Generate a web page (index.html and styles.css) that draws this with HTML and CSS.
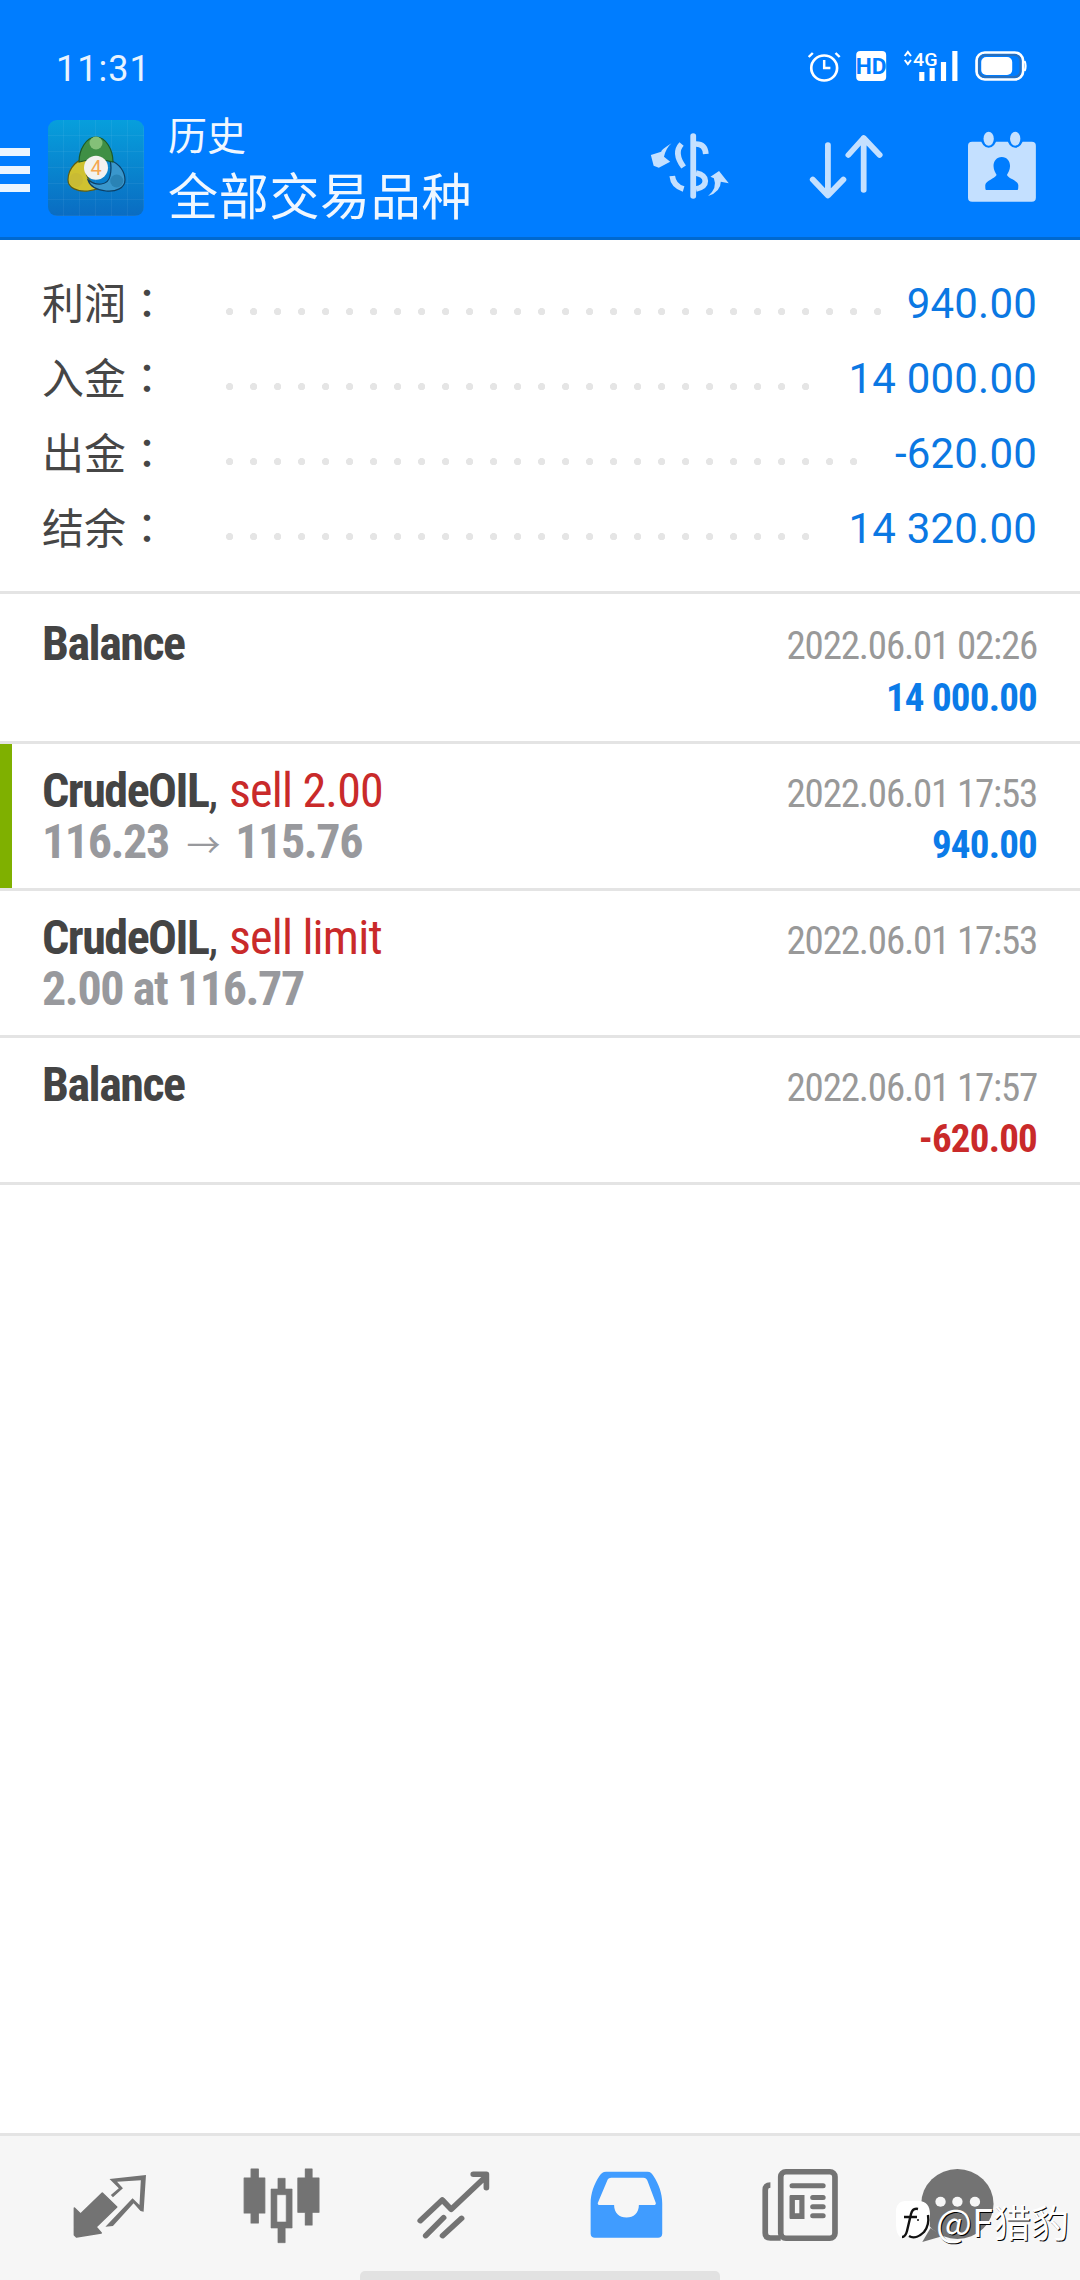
FILE: index.html
```html
<!DOCTYPE html>
<html lang="zh-CN">
<head>
<meta charset="utf-8">
<title>历史</title>
<link rel="stylesheet" href="styles.css">
</head>
<body>
<div class="app">
  <header class="appbar">
    <div class="status">
      <span class="time">11:31</span>
      <svg class="status-icons" viewBox="791.600 40 232.300 50" width="240" height="50" preserveAspectRatio="none">
        <circle cx="815" cy="68" r="12.500" fill="none" stroke="#fff" stroke-width="2.600"/>
        <path d="M815 60v8h6M804 53l-4 4M826 53l4 4" fill="none" stroke="#fff" stroke-width="2.400"/>
        <rect x="846" y="51" width="29" height="30" rx="4" fill="#fff"/>
        <text x="860.500" y="74" class="hd">HD</text>
        <path d="M893 56l3-4 3 4M893 60l3 4 3-4" fill="none" stroke="#fff" stroke-width="2"/>
        <text x="901" y="66" class="net">4G</text>
        <path d="M907 72h5v9h-5zM917 68h5v13h-5zM928 62h5v19h-5zM939 51h5v30h-5z" fill="#fff"/>
        <rect x="962.500" y="52.500" width="45" height="27" rx="8" fill="none" stroke="#fff" stroke-width="2.600"/>
        <rect x="965" y="55" width="40" height="22" rx="6" fill="none" stroke="#2a6fbb" stroke-width="2"/>
        <rect x="967" y="57" width="30" height="18" rx="5" fill="#fff"/>
        <path d="M1009 61q2 5 0 10" fill="none" stroke="#fff" stroke-width="2"/>
      </svg>
    </div>
    <div class="toolbar">
      <div class="burger"><i></i><i></i><i></i></div>
      <svg class="logo" viewBox="48 120 96 96" width="96" height="96">
        <defs>
          <linearGradient id="lg" x1="0" y1="0" x2="0" y2="1">
            <stop offset="0" stop-color="#079fdc"/>
            <stop offset="1" stop-color="#0a6cc2"/>
          </linearGradient>
          <pattern id="grid" x="48" y="120" width="16" height="16" patternUnits="userSpaceOnUse">
            <path d="M16 0V16H0" fill="none" stroke="#fff" stroke-opacity=".1" stroke-width="1"/>
          </pattern>
        </defs>
        <rect x="48" y="120" width="96" height="96" rx="9" fill="url(#lg)"/>
        <rect x="48" y="120" width="96" height="96" rx="9" fill="url(#grid)"/>
        <path d="M92 157C78 157 68 168 68 180C68 188 78 192 88 191C96 190 104 187 105 185Q88 186 86 172Q86 162 92 157Z" fill="#cfc230" stroke="#5f5c12" stroke-width="1.200"/>
        <path d="M110 160C120 164 125 172 125 180C125 188 116 192 106 191C97 190 90 186 88 180C96 186 108 186 110 176Q112 168 110 160Z" fill="#3a97cc" stroke="#0b3f66" stroke-width="1.200"/>
        <path d="M96 137C106 137 113 150 113 162L104 160Q96 154 88 160L79 162C79 150 86 137 96 137Z" fill="#3f8f45" stroke="#1d5a26" stroke-width="1.200"/>
        <circle cx="96" cy="143" r="6.500" fill="#84c078"/>
        <circle cx="76" cy="180" r="7" fill="#c9bb34"/>
        <circle cx="116.700" cy="181" r="6.500" fill="#2a83b5"/>
        <circle cx="96" cy="167.700" r="12" fill="#f2f2f0"/>
        <text x="96" y="175" class="four">4</text>
      </svg>
      <div class="heading">
        <div class="heading-sub">历史</div>
        <div class="heading-main">全部交易品种</div>
      </div>
      <div class="actions">
        <svg class="act" viewBox="627.100 114 130.700 123" width="135" height="123" preserveAspectRatio="none">
          <path d="M688.300 136v60" stroke="#c4e0ff" stroke-width="5.600" stroke-linecap="round" fill="none"/>
          <path d="M691 144q9 0 9.500 10M677 144q-8 9 2 23M691 173q9 2 9 8t-9 8M668 176q1 10 11 13" stroke="#c4e0ff" stroke-width="5.500" fill="none"/>
          <path d="M667.300 143.300Q657 150 657.300 151.700L647.300 155 650 165.700 655 167.700 666 161.700 660 156.700Q662 148 667.300 143.300Z" fill="#c4e0ff"/>
          <path d="M702.700 196Q712 188 708.300 178.300L705 176.700 713.300 171 722.700 183.300 715 181.700Q715 191.700 702.700 196Z" fill="#c4e0ff"/>
        </svg>
        <svg class="act" viewBox="757.800 114 135.500 123" width="140" height="123" preserveAspectRatio="none">
          <path d="M818.700 145v50M804 179.500l14.700 16 15-16M853.300 138v52M838.500 155l14.800-17 15.500 17" fill="none" stroke="#c4e0ff" stroke-width="5.600" stroke-linecap="round" stroke-linejoin="round"/>
        </svg>
        <svg class="act" viewBox="893.300 114 130.700 123" width="135" height="123" preserveAspectRatio="none">
          <rect x="954.300" y="141.700" width="65.700" height="60" rx="4" fill="#c4e0ff"/>
          <ellipse cx="974.300" cy="138.700" rx="7.500" ry="9" fill="#007dff"/>
          <ellipse cx="1000" cy="138.700" rx="7.500" ry="9" fill="#007dff"/>
          <ellipse cx="974.300" cy="138.700" rx="5" ry="7" fill="#c4e0ff"/>
          <ellipse cx="1000" cy="138.700" rx="5" ry="7" fill="#c4e0ff"/>
          <path d="M987 157c5 0 8 4 8 9 0 4-2 7-3 9 2 4 10 5 11 10 0 3 0 5-1 5h-30c-1 0-1-2-1-5 1-5 9-6 11-10-1-2-3-5-3-9 0-5 3-9 8-9z" fill="#007dff"/>
        </svg>
      </div>
    </div>
  </header>

  <section class="summary">
    <div class="sum-row">
      <div class="sum-label">利润<span class="colon" lang="zh-TW">：</span></div>
      <div class="dots"></div>
      <div class="sum-value">940.00</div>
    </div>
    <div class="sum-row">
      <div class="sum-label">入金<span class="colon" lang="zh-TW">：</span></div>
      <div class="dots"></div>
      <div class="sum-value">14 000.00</div>
    </div>
    <div class="sum-row">
      <div class="sum-label">出金<span class="colon" lang="zh-TW">：</span></div>
      <div class="dots"></div>
      <div class="sum-value">-620.00</div>
    </div>
    <div class="sum-row">
      <div class="sum-label">结余<span class="colon" lang="zh-TW">：</span></div>
      <div class="dots"></div>
      <div class="sum-value">14 320.00</div>
    </div>
  </section>

  <main class="list">
    <article class="deal deal-first">
      <div class="deal-left">
        <div class="deal-title"><b>Balance</b></div>
      </div>
      <div class="deal-right">
        <div class="deal-date">2022.06.01 02:26</div>
        <div class="deal-amount pos">14 000.00</div>
      </div>
    </article>
    <article class="deal deal-closed">
      <div class="deal-left">
        <div class="deal-title"><b>CrudeOIL</b>, <span class="red">sell 2.00</span></div>
        <div class="deal-sub">116.23 <span class="arrow">→</span> 115.76</div>
      </div>
      <div class="deal-right">
        <div class="deal-date">2022.06.01 17:53</div>
        <div class="deal-amount pos">940.00</div>
      </div>
    </article>
    <article class="deal">
      <div class="deal-left">
        <div class="deal-title"><b>CrudeOIL</b>, <span class="red">sell limit</span></div>
        <div class="deal-sub">2.00 at 116.77</div>
      </div>
      <div class="deal-right">
        <div class="deal-date">2022.06.01 17:53</div>
      </div>
    </article>
    <article class="deal">
      <div class="deal-left">
        <div class="deal-title"><b>Balance</b></div>
      </div>
      <div class="deal-right">
        <div class="deal-date">2022.06.01 17:57</div>
        <div class="deal-amount neg">-620.00</div>
      </div>
    </article>
  </main>

  <nav class="nav">
    <svg viewBox="0 0 183.900 144" width="190" height="144" preserveAspectRatio="none">
      <path d="M72 72L78 78 99 57 113 71 93 91 98 97 74 101 72 99Z" fill="#737373" stroke="#737373" stroke-width="1.500" stroke-linejoin="round"/>
      <path d="M106 43L141.300 39 139 75.700 136 75 129.300 67.300 109.300 90 102 90.700 128.300 62.300 135 69 136.300 44.300 113.300 45.700 119 52.300 109.300 61.300 107.300 59 115 52.300Z" fill="#737373"/>
    </svg>
    <svg viewBox="183.900 0 164.500 144" width="170" height="144" preserveAspectRatio="none">
      <path d="M243 33h7v9h6.300v35H250v10h-7V77h-6.700V42H243z" fill="#737373" stroke="#737373" stroke-linejoin="round"/>
      <path d="M295.500 33h6.500v9h6.700v34.300H302V89h-6.500V76.300h-7.200V42h7.200z" fill="#737373" stroke="#737373" stroke-linejoin="round"/>
      <path fill-rule="evenodd" d="M269 42.300h7V53h6.700v39H276v14.700h-7V92h-6.700V53H269zM268 58.700V86h9V58.700z" fill="#737373" stroke="#737373" stroke-width=".6" stroke-linejoin="round"/>
    </svg>
    <svg viewBox="348.400 0 164.500 144" width="170" height="144" preserveAspectRatio="none">
      <path d="M406.700 84.700L428 64l8.700 9.300L470 40.700M458 38.300h12.700v13.400M412 99.700l17.300-18M428.300 99.700l18.400-17.400" fill="none" stroke="#737373" stroke-width="5.500" stroke-linecap="round" stroke-linejoin="round"/>
    </svg>
    <svg viewBox="530.300 0 169.400 144" width="175" height="144" preserveAspectRatio="none">
      <path fill-rule="evenodd" d="M604 35.700h40c3 0 4.500 2 6 4.500 5 8 8.300 17 8.300 27v30.500c0 2.500-1.800 4-4 4H593c-2.200 0-4-1.500-4-4V67.200c0-10 3.300-19 8.300-27 1.500-2.500 3.700-4.500 6.700-4.500zM609 41.700c-2 0-3.500 1-4 3l-9 22c-.5 1.500.5 2.300 2 2.300h13.700c0 8 5 12.500 12 12.500s12-4.500 12-12.500H650c1.500 0 2.500-.8 2-2.300l-8-22c-.7-2-2-3-4-3z" fill="#409cff"/>
    </svg>
    <svg viewBox="699.700 0 159.700 144" width="165" height="144" preserveAspectRatio="none">
      <rect x="773" y="35.700" width="52.500" height="66.500" rx="5" fill="none" stroke="#737373" stroke-width="5.500"/>
      <path d="M763 49q-5 0-5 5v43q0 5 5 5h10" fill="none" stroke="#737373" stroke-width="5.500"/>
      <path d="M784 49.800h30M804 61.500h10M804 70.700h10M804 79.800h10" fill="none" stroke="#737373" stroke-width="5" stroke-linecap="round"/>
      <path fill-rule="evenodd" d="M783 59h13v24h-13c-1 0-1.500-.5-1.500-1.500v-21c0-1 .5-1.500 1.500-1.500zM786.700 64v13.300h4.300V64z" fill="#737373"/>
    </svg>
    <svg viewBox="859.400 0 203.300 144" width="210" height="144" preserveAspectRatio="none">
      <circle cx="944" cy="68" r="35" fill="#737373"/>
      <path d="M918 92l-8 14 20-6z" fill="#737373"/>
      <circle cx="927.700" cy="65.700" r="5" fill="#f6f6f6"/>
      <circle cx="944" cy="65.700" r="5" fill="#f6f6f6"/>
      <circle cx="961" cy="65.700" r="5" fill="#f6f6f6"/>
    </svg>
    <div class="home-bar"></div>
    <div class="watermark">
      <svg class="wm-logo" viewBox="0 0 36 42" width="36" height="42">
        <path d="M10 1h14c7 0 11 5 11 13v8c0 9-5 14-13 14H12L5 37C2 34 1 30 1 22V11C1 5 5 1 10 1z" fill="#fff"/>
        <path d="M23 9c-4-1-6 1-7 5l-4 17c-1 4-3 6-5 6M9 17h13M14 36c5 3 11 0 15-4 4-5 5-11 4-17" fill="none" stroke="#111" stroke-width="2.400"/>
        <circle cx="23" cy="20" r="1" fill="#111"/>
      </svg>
      <span class="wm-text">@F猎豹</span>
    </div>
  </nav>
</div>
</body>
</html>
```

FILE: styles.css
```css
* { box-sizing: border-box; }
html, body { margin: 0; padding: 0; background: #fff; }
body { font-family: Roboto, "Noto Sans CJK SC", sans-serif; }
.app { width: 1080px; height: 2280px; display: flex; flex-direction: column; overflow: hidden; }

.appbar { background: #007dff; border-bottom: 3px solid #0069cf; color: #fff; height: 240px; flex: none; }
.status { height: 114px; display: flex; justify-content: space-between; padding: 40px 40px 0 56px; }
.time { font-size: 36px; line-height: 50px; letter-spacing: 1px; color: #e8f3ff; padding-top: 4px; }
.status-icons { display: block; }
.hd { font: 700 22px Roboto, sans-serif; fill: #007dff; text-anchor: middle; }
.net { font: 500 19px Roboto, sans-serif; fill: #fff; }

.toolbar { height: 123px; display: flex; align-items: flex-start; }
.burger { width: 48px; padding-top: 34px; display: flex; flex-direction: column; gap: 10px; flex: none; }
.burger i { display: block; width: 30px; height: 8px; background: #eaf5ff; }
.logo { display: block; margin-top: 6px; flex: none; }
.four { font: 400 20px Roboto, sans-serif; fill: #f5a650; text-anchor: middle; }
.heading { margin-left: 24px; font-family: "Noto Sans CJK SC", sans-serif; color: #f0f7ff; }
.heading-sub { font-size: 39px; line-height: 40px; margin-top: -1px; }
.heading-main { font-size: 50px; line-height: 58px; letter-spacing: .7px; margin-top: 11px; }
.actions { margin-left: auto; display: flex; padding-right: 40px; }
.act { display: block; }

.summary { padding: 26px 0 25px; border-bottom: 3px solid #e4e4e4; flex: none; }
.sum-row { height: 75px; display: flex; padding-right: 43px; }
.sum-label { width: 226px; padding-left: 42px; font: 42px/70px "Noto Sans CJK SC", sans-serif; color: #464646; flex: none; white-space: nowrap; }
.colon { font-family: "Noto Sans CJK TC", sans-serif; }
.dots { flex: 1; margin-right: 26px; background-image: radial-gradient(circle at 3.600px 3.600px, #e5e5e5 3.400px, transparent 3.900px); background-size: 24px 8px; background-repeat: repeat-x; background-position: 0 41.500px; }
.sum-value { font-size: 42px; line-height: 75px; letter-spacing: .2px; color: #0b78e3; }

.list { flex: 1; }
.deal { height: 147px; display: flex; justify-content: space-between; padding: 21px 43px 0 42px; border-bottom: 3px solid #e4e4e4; position: relative; }
.deal-first { height: 150px; padding-top: 24px; }
.deal-closed::before { content: ""; position: absolute; left: 0; top: 0; bottom: 0; width: 12px; background: #7fb000; }
.deal-title { font-size: 48px; line-height: 51px; color: #444; font-stretch: 75%; }
.deal-title b { font-weight: 700; letter-spacing: -1.500px; }
.red { color: #c92a2a; letter-spacing: -.8px; }
.deal-sub { font-size: 48px; line-height: 51px; font-weight: 700; color: #98999d; font-stretch: 75%; letter-spacing: -1.400px; }
.arrow { font-weight: 400; font-size: 34px; letter-spacing: 0; margin: 0 5px 0 8px; }
.deal-right { text-align: right; padding-top: 4px; }
.deal-first .deal-right { padding-top: 3px; }
.deal-date { font-size: 39px; line-height: 51px; color: #999; font-stretch: 75%; letter-spacing: -1.200px; }
.deal-amount { font-size: 39px; line-height: 51px; font-weight: 700; font-stretch: 75%; letter-spacing: -.8px; margin-top: -.5px; }
.deal-first .deal-amount { margin-top: .5px; }
.pos { color: #0b7be8; }
.neg { color: #c92a2a; }

.nav { height: 147px; flex: none; border-top: 3px solid #e4e4e4; background: #f6f6f6; display: flex; position: relative; }
.nav svg { display: block; flex: none; }
.home-bar { position: absolute; left: 360px; bottom: 0; width: 360px; height: 9px; background: #e2e2e2; border-radius: 5px 5px 0 0; }
.watermark { position: absolute; left: 895px; top: 64px; display: flex; align-items: center; gap: 5px; }
.wm-text { font: 38px/40px "Noto Sans CJK SC", sans-serif; color: #fff; text-shadow: 1px 1px 0 #000; }
```
